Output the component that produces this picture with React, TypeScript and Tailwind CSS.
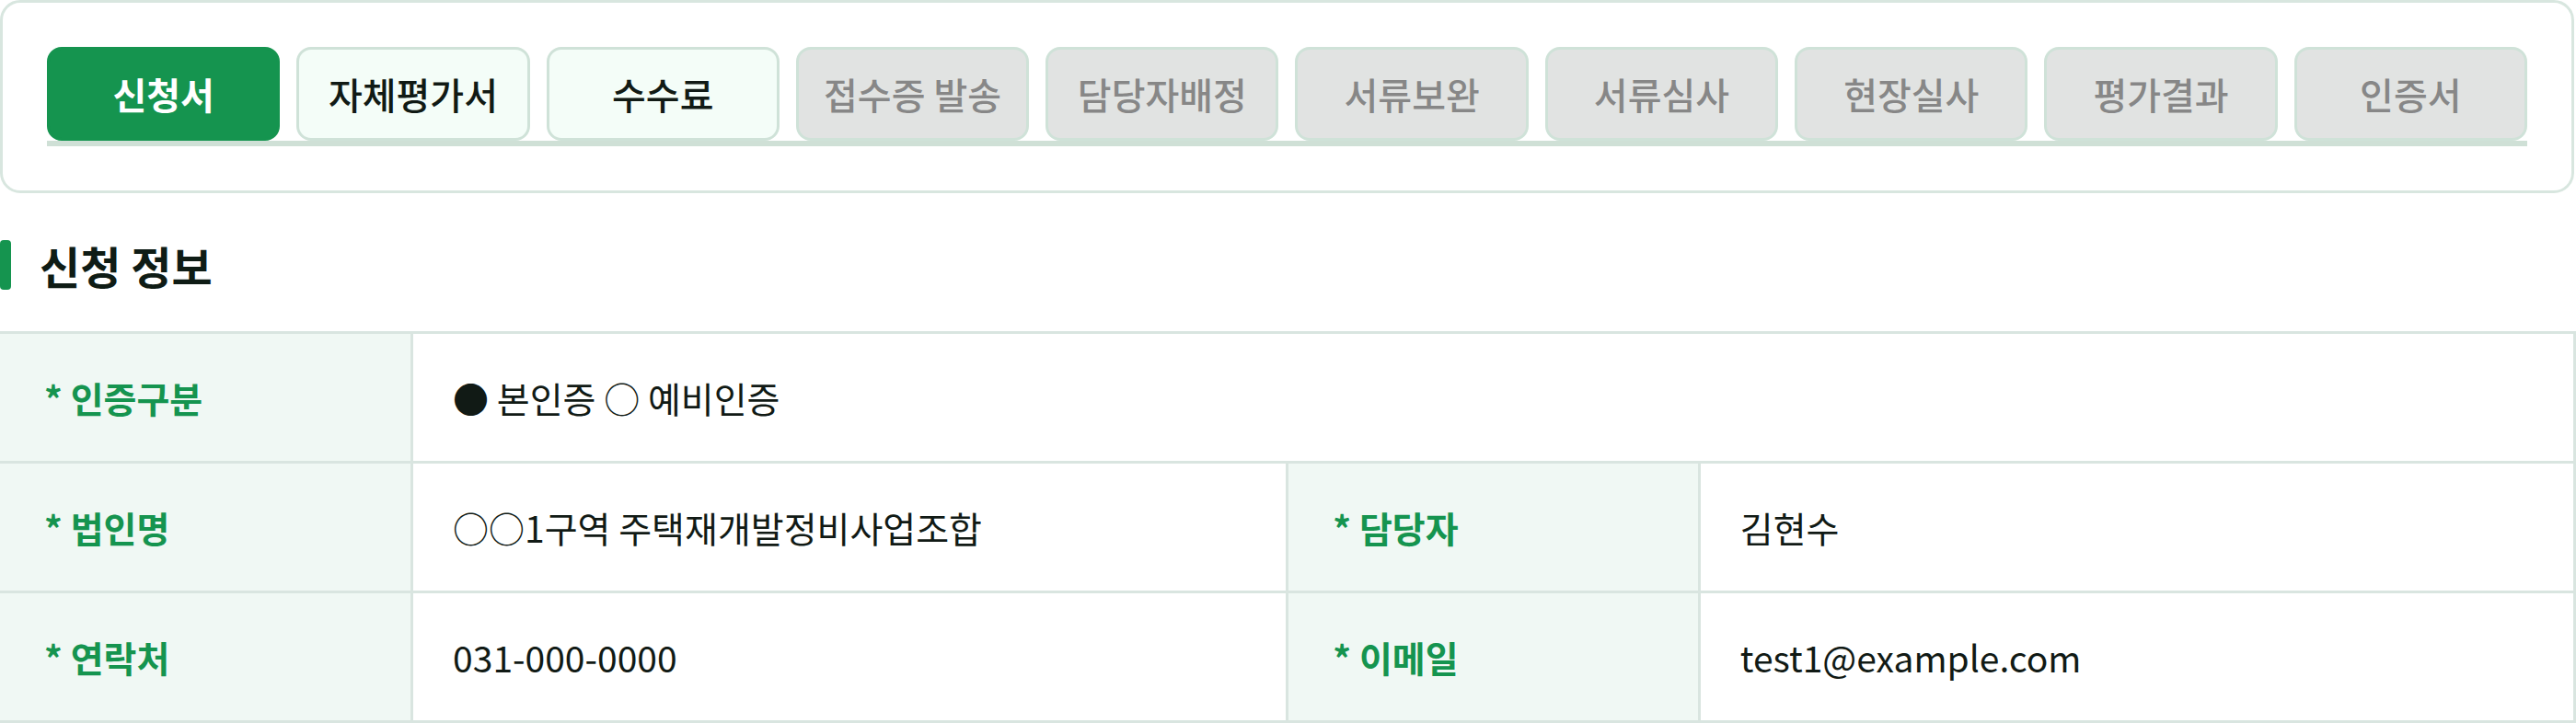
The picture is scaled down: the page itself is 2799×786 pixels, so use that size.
import React from 'react'

const steps = [
  { label: '신청서', state: 'active' },
  { label: '자체평가서', state: 'open' },
  { label: '수수료', state: 'open' },
  { label: '접수증 발송', state: 'locked' },
  { label: '담당자배정', state: 'locked' },
  { label: '서류보완', state: 'locked' },
  { label: '서류심사', state: 'locked' },
  { label: '현장실사', state: 'locked' },
  { label: '평가결과', state: 'locked' },
  { label: '인증서', state: 'locked' },
]

const tabStyle: Record<string, string> = {
  active: 'bg-[#15944f] text-white font-bold border-[#15944f]',
  open: 'bg-[#f4fdf8] text-[#111a15] font-medium border-[#cfe2d8]',
  locked: 'bg-[#e1e3e2] text-[#878787] font-medium border-[#cfe2d8]',
}

function Label({ children }: { children: React.ReactNode }) {
  return (
    <td className="w-[16%] h-[141px] border-[3px] border-l-0 border-[#d9e5e0] bg-[#f0f8f4] pl-[48px] text-[39px] font-bold text-[#15944f]">
      * {children}
    </td>
  )
}

function Value({ children, span }: { children: React.ReactNode; span?: number }) {
  return (
    <td colSpan={span} className="w-[34%] h-[141px] border-[3px] border-[#d9e5e0] bg-white pl-[43px] text-[39px] text-[#111a15]">
      {children}
    </td>
  )
}

export default function App() {
  return (
    <div className="min-h-screen bg-white" style={{ fontFamily: '"Noto Sans CJK KR", "Noto Sans", sans-serif' }}>
      <div className="w-[2797px] rounded-[22px] border-[3px] border-[#d8e6df] px-[48px] pt-[48px] pb-[48px]">
        <div className="flex gap-[18px] border-b-[6px] border-[#cfe0d6]">
          {steps.map(s => (
            <button
              key={s.label}
              className={`flex h-[102px] flex-1 items-center justify-center rounded-[16px] border-[3px] text-[40px] ${tabStyle[s.state]}`}
            >
              {s.label}
            </button>
          ))}
        </div>
      </div>

      <div className="mt-[51px] flex items-center">
        <span className="h-[54px] w-[12px] rounded-[4px] bg-[#15944f]" />
        <h2 className="ml-[31px] text-[48px] font-bold leading-none text-[#0f1c15]">신청 정보</h2>
      </div>

      <table className="mt-[45px] w-full border-collapse">
        <tbody>
          <tr>
            <Label>인증구분</Label>
            <Value span={3}>● 본인증 ○ 예비인증</Value>
          </tr>
          <tr>
            <Label>법인명</Label>
            <Value>○○1구역 주택재개발정비사업조합</Value>
            <Label>담당자</Label>
            <Value>김현수</Value>
          </tr>
          <tr>
            <Label>연락처</Label>
            <Value>031-000-0000</Value>
            <Label>이메일</Label>
            <Value>test1@example.com</Value>
          </tr>
        </tbody>
      </table>
    </div>
  )
}
